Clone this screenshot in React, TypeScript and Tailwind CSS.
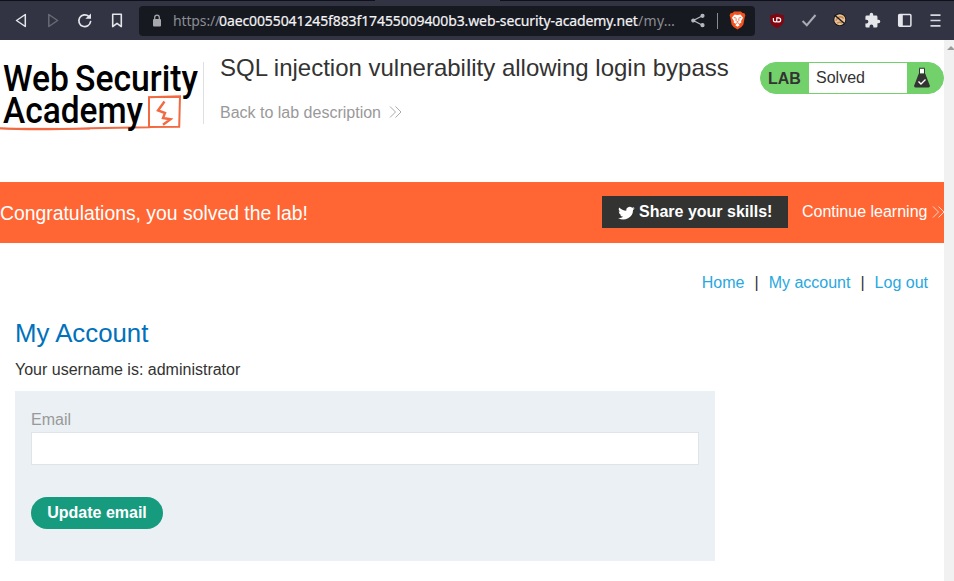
import React from "react";

function DoubleChevron({ color, className }: { color: string; className?: string }) {
  return (
    <svg className={className} width="13" height="12" viewBox="0 0 13 12" fill="none" stroke={color} strokeWidth="1">
      <path d="M1 .5 6.500 6 1 11.500M6.500 .5 12 6 6.500 11.500" />
    </svg>
  );
}

function Toolbar() {
  return (
    <header className="h-10 shrink-0 bg-[#323443]">
      <div className="flex h-[1px] bg-[#0f101a]">
        <div className="ml-[375px] w-[125px] bg-[#323443]" />
      </div>
      <div className="flex h-[39px] items-center pl-[14px]">
        <svg width="14" height="16" viewBox="0 0 14 16" fill="none" stroke="#e4e6ea" strokeWidth="1.500" strokeLinejoin="round">
          <path d="M11.300 1.500v12L2.500 7.500Z" />
        </svg>
        <svg className="ml-[19px]" width="14" height="16" viewBox="0 0 14 16" fill="none" stroke="#686b77" strokeWidth="1.500" strokeLinejoin="round">
          <path d="M1.800 1.500v12l8.800-6Z" />
        </svg>
        <svg className="ml-[16px]" width="16" height="16" viewBox="0 0 16 16" fill="none" stroke="#e4e6ea" strokeWidth="1.700" strokeLinecap="round">
          <path d="M13.600 8.500A5.900 5.900 0 1 1 11.800 3.400" />
          <path d="M12.900 3v1.700h-1.800Z" fill="#e4e6ea" strokeWidth="2.200" />
        </svg>
        <svg className="ml-[16px]" width="16" height="16" viewBox="0 0 16 16" fill="none" stroke="#e4e6ea" strokeWidth="1.600" strokeLinejoin="round">
          <path d="M3.700 1.300h8.600v12.300L8 10.300l-4.300 3.300Z" />
        </svg>
        <div className="ml-[14px] flex h-[30px] w-[616px] items-center rounded bg-[#171921]">
          <svg className="ml-[13px]" width="10" height="14" viewBox="0 0 10 14">
            <rect x="1" y="5" width="8" height="7.500" rx="1" fill="#a6a8ad" />
            <path d="M2.700 5V3.500a2.300 2.300 0 0 1 4.600 0V5" fill="none" stroke="#a6a8ad" strokeWidth="1.300" />
          </svg>
          <div className="ml-[11px] flex w-[505px] items-center whitespace-nowrap font-['Noto_Sans',sans-serif] text-[14px] text-[#8b8d93]">
            <span className="w-[46px] tracking-[-0.140px]">https://</span>
            <span className="w-[419px] tracking-[-0.105px] text-[#f3f3f5] [-webkit-text-stroke:0.200px_#f3f3f5]">0aec0055041245f883f17455009400b3.web-security-academy.net</span>
            <span className="tracking-[0.300px]">/my…</span>
          </div>
          <svg className="ml-[12px]" width="16" height="16" viewBox="0 0 16 16" fill="#b7b9c0" stroke="#b7b9c0" strokeWidth="1.200">
            <path d="M12.500 2.800 3.300 7.500l9.200 4.700" fill="none" />
            <circle cx="12.500" cy="2.800" r="1.500" />
            <circle cx="3.300" cy="7.500" r="1.500" />
            <circle cx="12.500" cy="12.200" r="1.500" />
          </svg>
          <div className="ml-[11px] h-4 w-px bg-[#8a8c94]" />
          <svg className="ml-[11px]" width="17" height="19" viewBox="0 0 17 19">
            <path d="M5 .6h7l1.500 1.500 2 .2.900 2.300-.7 1.600-1.300 7.300-2 2.500-3.900 2.500L4.600 16l-2-2.500L1.300 6.200.6 4.600l.9-2.300 2-.2Z" fill="#f4511e" />
            <path d="m5.500 3.500 3 .6 3-.6 2.600 3.200-2 3.300.2 1.700-2.600 1.200 1 1.300-2.200 1.500-2.200-1.500 1-1.300-2.600-1.200.2-1.700-2-3.300Z" fill="#fff" />
            <path d="m4.800 6.500 2.400.6M12.200 6.500l-2.400.6M7.300 7.500 7 9.400l1.500 1.500L10 9.400l-.3-1.900M7 12.500l1.500-.8 1.500.8" fill="none" stroke="#f4511e" strokeWidth=".8" />
          </svg>
        </div>
        <svg className="ml-[14px]" width="16" height="16" viewBox="0 0 16 16">
          <path d="M8 .2c2 1.300 4 1.800 6.800 1.900V8c0 3.400-3.500 5.500-6.800 7-3.300-1.500-6.800-3.600-6.800-7V2.100C4 2 6 1.500 8 .2Z" fill="#800610" />
          <path d="M4.400 4.900v2.300q0 1.700 1.700 1.700t1.700-1.700V4.900h1.400q2.500 0 2.500 2t-2.500 2H7.800" fill="none" stroke="#fff" strokeWidth="1.200" />
        </svg>
        <svg className="ml-[16px]" width="16" height="16" viewBox="0 0 16 16" fill="none" stroke="#a9acb5" strokeWidth="2">
          <path d="m1.600 8 4.200 4.200L14.500 2" />
        </svg>
        <svg className="ml-[14px]" width="17" height="16" viewBox="0 0 17 16">
          <circle cx="8.800" cy="6.700" r="6.400" fill="#171719" />
          <circle cx="8.800" cy="6.700" r="5.500" fill="#e8c49c" />
          <path d="M5 7.700q1.500-4 5-4 2 .3 2.500 2M6 10.200q3-2 5 0" fill="none" stroke="#c8874c" strokeWidth="1.600" />
          <path d="m3.500 2 10.500 9" stroke="#1b1b1d" strokeWidth="1.500" />
        </svg>
        <svg className="ml-[16px]" width="17" height="17" viewBox="0 0 24 24" fill="#e4e6ea">
          <path d="M20.500 11H19V7a2 2 0 0 0-2-2h-4V3.500a2.500 2.500 0 0 0-5 0V5H4a2 2 0 0 0-2 2v3.800h1.500a2.700 2.700 0 0 1 0 5.400H2V20a2 2 0 0 0 2 2h3.800v-1.500a2.700 2.700 0 0 1 5.400 0V22H17a2 2 0 0 0 2-2v-4h1.500a2.500 2.500 0 0 0 0-5Z" />
        </svg>
        <svg className="ml-[16px]" width="16" height="16" viewBox="0 0 16 16">
          <rect x="1.700" y="1.500" width="12.200" height="11.700" rx="1" fill="none" stroke="#e4e6ea" strokeWidth="1.500" />
          <path d="M1.700 1.600h4.100v11.500H1.700Z" fill="#e4e6ea" />
        </svg>
        <svg className="ml-[17px]" width="12" height="16" viewBox="0 0 12 16" stroke="#d7d9df" strokeWidth="1.700">
          <path d="M.5 2.200h10M.5 7.500h10M.5 12.800h10" />
        </svg>
      </div>
    </header>
  );
}

function AcademyLogo() {
  return (
    <svg className="shrink-0 overflow-visible" width="203" height="76" viewBox="0 0 203 76" fontFamily="Roboto, sans-serif" fontWeight="500" fontSize="37">
      <path d="M0 71.200C20 72.500 60 72.200 90 71.200l59-1v-30l31-1-.8 30.500-30.500.2" fill="none" stroke="#f26a41" strokeWidth="2" />
      <path d="M148.500 40.200 180.500 40.200M0 71.500 90 71.700" fill="none" stroke="#f26a41" strokeWidth="1.500" />
      <path d="m164.500 44.500-6.500 9 7 2.500-2 5 7.500 1.200-7.500 5.500" fill="none" stroke="#f26a41" strokeWidth="2.400" />
      <text x="3" y="34" textLength="66" lengthAdjust="spacingAndGlyphs">Web</text>
      <text x="75" y="34" textLength="123" lengthAdjust="spacingAndGlyphs">Security</text>
      <text x="3" y="66" textLength="140" lengthAdjust="spacingAndGlyphs">Academy</text>
    </svg>
  );
}

function LabHeader() {
  return (
    <section className="flex h-[142px] shrink-0 pt-[14px]">
      <div className="pt-[3px]"><AcademyLogo /></div>
      <div className="mt-[8px] h-[62px] w-px bg-[#dfdfe3]" />
      <div className="ml-4 w-[540px]">
        <h2 className="text-2xl leading-7 text-[#333332]">SQL injection vulnerability allowing login bypass</h2>
        <a className="mt-[21px] flex items-center text-base leading-5 text-[#999]">
          Back to lab description
          <DoubleChevron color="#aaa" className="mb-[2px] ml-[8px]" />
        </a>
      </div>
      <div className="mt-[8px] flex h-8 w-[184px] overflow-hidden rounded-full border border-[#73d16c] bg-[#73d16c]">
        <span className="w-12 pl-[7px] text-base leading-8 font-bold text-[#333332]">LAB</span>
        <span className="w-[98px] bg-white pl-[7px] text-base leading-[30px] text-[#333332]">Solved</span>
        <svg className="mt-[4px] ml-[6px]" width="18" height="22" viewBox="0 0 18 22">
          <path d="M6.500 1.500h5v5h-5Z" fill="#fff" />
          <path d="M6 .8h6v1H6ZM6 2h1v5H6ZM11 2h1v5h-1Z" fill="#333332" />
          <path d="M5.800 6.500h6.400l4.600 12q.4 2-1.300 2h-13q-1.700 0-1.300-2Z" fill="#333332" />
          <path d="m5.500 14.500 2.500 2.500 4.500-4.500" fill="none" stroke="#fff" strokeWidth="1.400" />
        </svg>
      </div>
    </section>
  );
}

function SolvedBanner() {
  return (
    <section className="flex h-[61px] shrink-0 items-start overflow-hidden bg-[#ff6633] pt-[14px] text-white">
      <p className="w-[602px] shrink-0 text-[19.360px] leading-[34px]">Congratulations, you solved the lab!</p>
      <button className="flex h-8 w-[186px] shrink-0 items-center bg-[#333332] pl-4 text-base font-bold whitespace-nowrap">
        <svg className="mr-1 mt-[2px]" width="17" height="16" viewBox="0 0 24 24" preserveAspectRatio="none" fill="#fff">
          <path d="M23.600 4.900c-.8.400-1.800.7-2.700.8 1-.6 1.700-1.500 2.100-2.600-.9.500-1.900.9-3 1.200a4.800 4.800 0 0 0-8.200 4.300C7.700 8.400 4.200 6.500 1.800 3.600a4.800 4.800 0 0 0 1.500 6.400c-.8 0-1.500-.2-2.200-.6a4.800 4.800 0 0 0 3.800 4.800c-.7.200-1.400.2-2.100.1a4.800 4.800 0 0 0 4.500 3.300A9.700 9.700 0 0 1 .2 19.600 13.700 13.700 0 0 0 21.200 8v-.6c1-.6 1.800-1.500 2.400-2.500Z" />
        </svg>
        Share your skills!
      </button>
      <a className="ml-[14px] flex h-8 shrink-0 items-center text-base whitespace-nowrap">
        Continue learning
        <DoubleChevron color="#ffd5c6" className="ml-[5px]" />
      </a>
    </section>
  );
}

function Account() {
  return (
    <main>
      <nav className="mt-[30px] flex justify-end pr-4 text-base leading-5 text-[#29a7df]">
        <a>Home</a><span className="mx-[10px] text-[#333332]">|</span>
        <a>My account</a><span className="mx-[10px] text-[#333332]">|</span>
        <a>Log out</a>
      </nav>
      <div className="mt-[24px] ml-[15px] w-[700px]">
        <h1 className="text-[25.800px] leading-8 text-[#0071bb]">My Account</h1>
        <p className="mt-[11px] text-base leading-5 text-[#333332]">Your username is: administrator</p>
        <form className="mt-[11px] h-[170px] bg-[#eaf0f3] px-4 pt-5">
          <label className="block text-base leading-[18px] text-[#999]" htmlFor="email">Email</label>
          <input id="email" className="mt-[3px] block h-[33px] w-full border border-[#dfe4e8] bg-white px-2 outline-none" />
          <button type="button" className="mt-8 h-8 w-[132px] rounded-full bg-[#169b7f] text-base leading-8 font-bold text-white">Update email</button>
        </form>
      </div>
    </main>
  );
}

export default function App() {
  return (
    <div className="flex h-[581px] w-[954px] flex-col overflow-hidden bg-white font-['Liberation_Sans',Arial,sans-serif]">
      <Toolbar />
      <div className="flex min-h-0 flex-1">
        <div className="flex w-[944px] flex-col overflow-hidden">
          <LabHeader />
          <SolvedBanner />
          <Account />
        </div>
        <aside className="w-[10px] bg-[#f1f1f1] pt-[6px] pl-[3px]">
          <svg width="7" height="5" viewBox="0 0 7 5"><path d="m0 4 4-4 4 4Z" fill="#9a9a9a" /></svg>
        </aside>
      </div>
    </div>
  );
}
